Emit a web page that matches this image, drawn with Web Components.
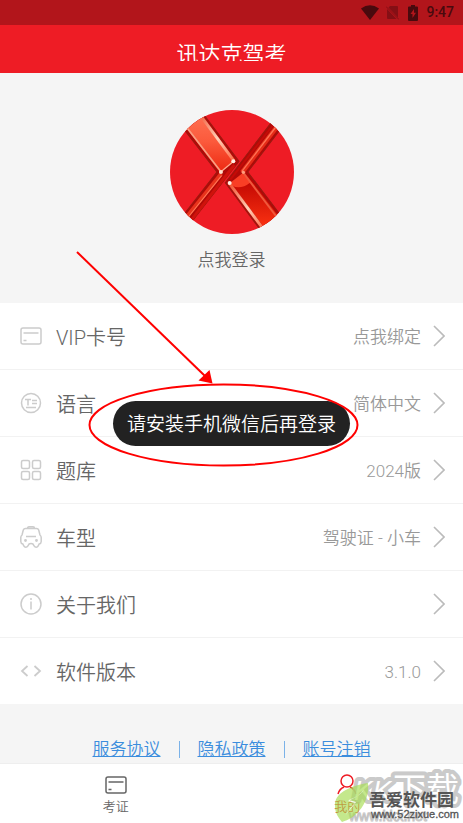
<!DOCTYPE html>
<html lang="zh-CN">
<head>
<meta charset="UTF-8">
<meta name="viewport" content="width=device-width, initial-scale=1">
<title>讯达克驾考</title>
<style>
  body {
    margin: 0;
    background: #f5f5f5;
    font-family: Roboto, "Noto Sans CJK SC", sans-serif;
    font-weight: 350;
    --brand: #ee1c25;
    --text: #666;
    --muted: #999;
    --link: #3b8ddd;
  }
</style>
</head>
<body>
<exam-app></exam-app>

<script>
// 圖示集中管理
const icons = {
  card: `<rect x="1" y="3" width="20" height="16" rx="2"/><path d="M3.500 8h15M3.500 15.500h3"/>`,
  lang: `<circle cx="11" cy="11" r="9.500"/><path d="M5 7.500h6M8 7.500v6M12 8.500h5M12 11.500h5M6 15.500h10"/>`,
  grid: `<rect x="1.500" y="1.500" width="8" height="8" rx="1.500"/><rect x="12.500" y="1.500" width="8" height="8" rx="1.500"/><rect x="1.500" y="12.500" width="8" height="8" rx="1.500"/><rect x="12.500" y="12.500" width="8" height="8" rx="1.500"/>`,
  car: `<path d="M7.500 2.500q0-1.700 1.500-1.700h4q1.500 0 1.500 1.700M5.500 2.500h11q1.700 0 2.200 1.500l1.300 5q1.200 1 1.200 2.500v4q0 2-2 2.500l-1 1.800q-.7 1.400-2 1.400-1.400 0-2-1.200L13 18q-2-1-4 0l-1.200 2q-.6 1.200-2 1.200-1.300 0-2-1.400l-1-1.800q-2-.5-2-2.500v-4Q.8 10 2 9l1.300-5q.5-1.500 2.200-1.500zM6 10.500h10"/><circle cx="5.500" cy="14.500" r=".7"/><circle cx="16.500" cy="14.500" r=".7"/>`,
  info: `<circle cx="11" cy="11" r="10"/><path d="M11 8.500v8M11 5v2"/>`,
  code: `<path d="M7.500 6L2 11l5.500 5M14.500 6l5.500 5-5.500 5" stroke-width="1.800"/>`,
  user: `<circle cx="11" cy="7" r="6"/><path d="M2 20c1-3.500 3.500-6 6-7M20 20c-1-3.500-3.500-6-6-7"/>`
};

const svgIcon = (name) =>
  `<svg viewBox="0 0 22 22" width="22" height="22" fill="none" stroke="currentColor" stroke-width="1.500" aria-hidden="true">${icons[name] || ''}</svg>`;

// 系統狀態列
class StatusBar extends HTMLElement {
  constructor() {
    super();
    this.attachShadow({ mode: 'open' }).innerHTML = `
      <style>
        :host {
          display: flex; align-items: center; justify-content: flex-end;
          height: 25px; padding-right: 9px; box-sizing: border-box;
          background: #b2151b; color: #490a0e;
          font-size: 14px; font-weight: 500; line-height: 25px;
        }
        svg { display: block; }
        .wifi { margin-right: 7px; }
        .sim { margin-right: 9px; }
        .battery { margin-right: 8px; }
      </style>
      <svg class="wifi" width="18" height="15" viewBox="0 0 18 15" fill="currentColor"><path d="M0 3.500Q9-3 18 3.500L9 15z"/></svg>
      <svg class="sim" width="13" height="15" viewBox="0 0 13 15"><path d="M4 1h7q1 0 1 1v10.500L2.500 2.500zM1 4l9.500 10H2q-1 0-1-1z" fill="#850f15"/><path d="M0 1.500l13 13" stroke="#850f15"/></svg>
      <svg class="battery" width="10" height="16" viewBox="0 0 10 16"><path d="M3 0h4v1.500h2q1 0 1 1V15q0 1-1 1H1q-1 0-1-1V2.500q0-1 1-1h2z" fill="currentColor"/><path d="M6 4L2.500 9h2v4L8 7.800H6z" fill="#b2151b"/></svg>
      <span>9:47</span>
    `;
  }
}
customElements.define('status-bar', StatusBar);

class TitleBar extends HTMLElement {
  constructor() {
    super();
    this.attachShadow({ mode: 'open' }).innerHTML = `
      <style>
        :host { display: block; padding: 17px 0 12px; background: var(--brand); }
        /* 標題的可視高度比行高小，下緣會被裁掉 */
        h1 {
          margin: 0; height: 19px; overflow: hidden;
          color: #fff; font-size: 22px; font-weight: inherit; line-height: 26px; text-align: center;
        }
      </style>
      <h1><slot></slot></h1>
    `;
  }
}
customElements.define('title-bar', TitleBar);

class ProfileCard extends HTMLElement {
  constructor() {
    super();
    this.attachShadow({ mode: 'open' }).innerHTML = `
      <style>
        :host { display: flex; justify-content: center; padding: 37px 0 30px; }
        button {
          display: flex; flex-direction: column; align-items: center; gap: 13px;
          padding: 0; border: 0; background: none;
          color: var(--text); font: inherit; font-size: 17px; line-height: 26px;
        }
        svg { display: block; }
      </style>
      <button type="button">
        <svg width="124" height="124" viewBox="30 30 370 370" aria-hidden="true">
          <defs>
            <clipPath id="round"><circle cx="215" cy="215" r="185"/></clipPath>
            <linearGradient id="wide" x1="0" y1="0" x2="0" y2="1">
              <stop offset="0" stop-color="#ff7355"/><stop offset=".5" stop-color="#fb5a3c"/><stop offset="1" stop-color="#ee2a12"/>
            </linearGradient>
            <linearGradient id="deep" x1="0" y1="0" x2="0" y2="1">
              <stop offset="0" stop-color="#b80000"/><stop offset="1" stop-color="#ff3512"/>
            </linearGradient>
            <linearGradient id="shine" x1="0" y1="0" x2="1" y2="1">
              <stop offset="0" stop-color="#f0502e"/><stop offset=".55" stop-color="#ffd0b8"/><stop offset="1" stop-color="#ff6a45"/>
            </linearGradient>
          </defs>
          <circle cx="215" cy="215" r="185" fill="#ee1c25"/>
          <g clip-path="url(#round)" stroke-linejoin="round">
            <path d="M54 65L110 16 236 183 85 376 60 356 170 215z" fill="#b00a08" stroke="#9a1a10" stroke-width="3"/>
            <path d="M62 62L112 34 222 182 184 213 174 210z" fill="url(#wide)"/>
            <path d="M112 34L221 182" stroke="url(#shine)" stroke-width="9"/>
            <path d="M72 72L182 214" stroke="#f9a084" stroke-width="5"/>
            <path d="M182 214L220 183" stroke="#ffab8c" stroke-width="4"/>
            <path d="M183 220L76 354" stroke="#e8331c" stroke-width="12"/>
            <path d="M184 226L84 350" stroke="#ff7a58" stroke-width="3"/>
            <path d="M222 194L92 360" stroke="#cf130c" stroke-width="9"/>
            <path d="M344 52L370 74 262 215 374 362 313 406 195 247z" fill="#b00a08" stroke="#9a1a10" stroke-width="3"/>
            <path d="M210 247L247 218 262 225 362 358 318 390z" fill="url(#deep)"/>
            <path d="M211 246L247 218 270 246Q240 269 216 256z" fill="#f93e25"/>
            <path d="M207 249L309 386" stroke="url(#shine)" stroke-width="9"/>
            <path d="M248 216L358 362" stroke="#f0583c" stroke-width="6"/>
            <path d="M355 72L245 216" stroke="#e52c18" stroke-width="14"/>
            <path d="M351 74L244 214" stroke="#ff7355" stroke-width="4"/>
            <path d="M336 77L210 238" stroke="#c40c08" stroke-width="6"/>
            <circle cx="219" cy="183" r="6" fill="#fff0e4"/><circle cx="182" cy="215" r="6" fill="#ffe0cc"/>
            <circle cx="208" cy="248" r="6" fill="#fff0e4"/><circle cx="249" cy="216" r="5" fill="#ff9b7c"/>
          </g>
        </svg>
        <slot></slot>
      </button>
    `;
  }
}
customElements.define('profile-card', ProfileCard);

class MenuRow extends HTMLElement {
  constructor() {
    super();
    this.attachShadow({ mode: 'open' }).innerHTML = `
      <style>
        :host { display: block; border-bottom: 1px solid #f2f2f2; background: #fff; }
        :host(:last-of-type) { border-bottom: 0; }
        button {
          display: flex; align-items: center; width: 100%; height: 66px;
          padding: 0 18px 0 20px; border: 0; background: none;
          font: inherit; text-align: left;
        }
        svg { display: block; flex: none; color: #ccc; }
        .label { margin-left: 14px; padding-top: 4px; flex: 1; color: var(--text); font-size: 20px; line-height: 28px; }
        .value { margin-right: 12px; padding-top: 2px; color: var(--muted); font-size: 17px; line-height: 24px; }
        .arrow { color: #bbb; }
      </style>
      <button type="button">
        ${svgIcon(this.getAttribute('icon'))}
        <span class="label"><slot></slot></span>
        <span class="value"><slot name="value"></slot></span>
        <svg class="arrow" width="12" height="22" viewBox="0 0 12 22" fill="none" stroke="currentColor" stroke-width="1.600" aria-hidden="true"><path d="M1 1l10 10L1 21"/></svg>
      </button>
    `;
  }
}
customElements.define('menu-row', MenuRow);

class PolicyLinks extends HTMLElement {
  constructor() {
    super();
    this.attachShadow({ mode: 'open' }).innerHTML = `
      <style>
        :host { display: block; padding: 32px 0 1px; }
        nav { display: flex; align-items: center; justify-content: center; gap: 18px; font-size: 17px; line-height: 26px; }
        a { color: var(--link); text-decoration: underline; }
        i { width: 1px; height: 17px; background: #7bb2e8; }
      </style>
      <nav>
        <a href="#service">服务协议</a><i></i>
        <a href="#privacy">隐私政策</a><i></i>
        <a href="#cancel">账号注销</a>
      </nav>
    `;
  }
}
customElements.define('policy-links', PolicyLinks);

class TabBar extends HTMLElement {
  constructor() {
    super();
    this.attachShadow({ mode: 'open' }).innerHTML = `
      <style>
        :host { display: block; margin-top: auto; background: #fff; border-top: 1px solid #eee; }
        nav { display: flex; height: 59px; }
        a {
          flex: 1; display: flex; flex-direction: column; align-items: center;
          padding-top: 10px; box-sizing: border-box;
          color: var(--text); font-size: 13px; line-height: 22px; text-decoration: none;
        }
        a[aria-current] { color: var(--brand); }
        svg { display: block; }
      </style>
      <nav>
        <a href="#exam">${svgIcon('card')}<span>考证</span></a>
        <a href="#mine" aria-current="page">${svgIcon('user')}<span>我的</span></a>
      </nav>
    `;
  }
}
customElements.define('tab-bar', TabBar);

class ToastMessage extends HTMLElement {
  constructor() {
    super();
    this.attachShadow({ mode: 'open' }).innerHTML = `
      <style>
        :host {
          position: absolute; top: 401px; left: 0; right: 0;
          display: flex; justify-content: center; pointer-events: none;
        }
        div {
          padding: 2px 14px 0; border-radius: 23px; background: #222;
          color: #fff; font-size: 19px; line-height: 43px; white-space: nowrap;
        }
      </style>
      <div role="status"><slot></slot></div>
    `;
  }
}
customElements.define('toast-message', ToastMessage);

// 箭頭與橢圓標註
class CalloutMark extends HTMLElement {
  constructor() {
    super();
    this.attachShadow({ mode: 'open' }).innerHTML = `
      <style>
        :host {
          position: absolute; top: 248px; left: 0; right: 0;
          display: flex; justify-content: center; pointer-events: none;
        }
        svg { display: block; flex: none; }
      </style>
      <svg width="463" height="222" viewBox="0 248 463 222" fill="none" stroke="#f00" stroke-width="2" aria-hidden="true">
        <ellipse cx="223.500" cy="425" rx="134" ry="40.500"/>
        <path d="M77 252L205 376"/>
        <path d="M212.500 383.500L209.500 370 198.500 380.500z" fill="#f00" stroke="none"/>
      </svg>
    `;
  }
}
customElements.define('callout-mark', CalloutMark);

// 右下角浮水印
class SiteMark extends HTMLElement {
  constructor() {
    super();
    this.attachShadow({ mode: 'open' }).innerHTML = `
      <style>
        :host { position: absolute; right: 0; bottom: 0; pointer-events: none; }
        svg { display: block; font-family: "Liberation Sans", "Noto Sans CJK SC", sans-serif; font-weight: 400; }
      </style>
      <svg width="133" height="58" viewBox="330 765 133 58">
        <g fill="#fff" stroke="#bdbdbd" stroke-width="8" stroke-linejoin="round" paint-order="stroke" opacity=".8">
          <text x="354" y="800" font-size="28" font-style="italic">KK</text>
          <text x="393" y="801" font-size="33">下载</text>
        </g>
        <text x="349" y="821" font-size="14" fill="#fff" stroke="#c4c4c4" stroke-width="1">www.kkx.net</text>
        <path d="M368 783C350 786 334 793 335 806c0 8 4 12 7 16 15-4 28-20 26-39z" fill="#a5dc4e" opacity=".65"/>
        <path d="M365 788c-4 6-10 10-17 13l7 2c-4 4-7 8-10 13 3-5 8-9 11-14l-7-2c7-3 13-6 16-12z" fill="#fff" opacity=".9"/>
        <text x="369" y="806" font-size="17" font-weight="700" fill="#555">吾爱软件园</text>
        <text x="371" y="818" font-size="11" fill="#555" stroke="#555" stroke-width=".3">www.52zixue.com</text>
      </svg>
    `;
  }
}
customElements.define('site-mark', SiteMark);

class ExamApp extends HTMLElement {
  constructor() {
    super();
    this.attachShadow({ mode: 'open' }).innerHTML = `
      <style>
        :host { position: relative; display: flex; flex-direction: column; min-height: 100vh; overflow: hidden; }
        main { display: block; }
      </style>
      <status-bar></status-bar>
      <title-bar>讯达克驾考</title-bar>
      <main>
        <profile-card>点我登录</profile-card>
        <section>
          <menu-row icon="card">VIP卡号<span slot="value">点我绑定</span></menu-row>
          <menu-row icon="lang">语言<span slot="value">简体中文</span></menu-row>
          <menu-row icon="grid">题库<span slot="value">2024版</span></menu-row>
          <menu-row icon="car">车型<span slot="value">驾驶证 - 小车</span></menu-row>
          <menu-row icon="info">关于我们</menu-row>
          <menu-row icon="code">软件版本<span slot="value">3.1.0</span></menu-row>
        </section>
        <policy-links></policy-links>
      </main>
      <tab-bar></tab-bar>
      <toast-message>请安装手机微信后再登录</toast-message>
      <callout-mark></callout-mark>
      <site-mark></site-mark>
    `;
  }
}
customElements.define('exam-app', ExamApp);
</script>
</body>
</html>
